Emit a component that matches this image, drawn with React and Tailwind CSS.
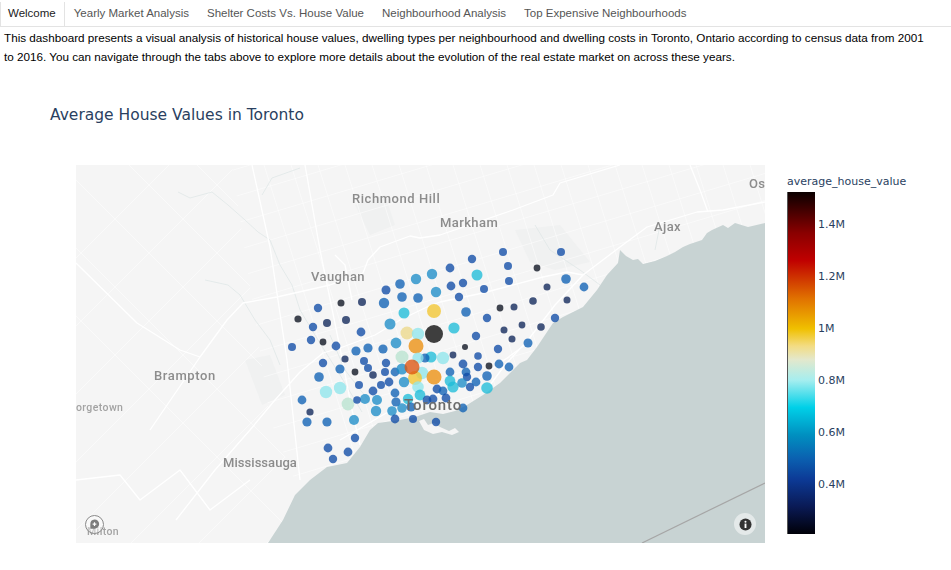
import React from 'react'

const TABS = [
  'Yearly Market Analysis',
  'Shelter Costs Vs. House Value',
  'Neighbourhood Analysis',
  'Top Expensive Neighbourhoods',
]

const TICKS = ['1.4M', '1.2M', '1M', '0.8M', '0.6M', '0.4M']

const COLORS = {
  b: '#0f4ba6',
  m: '#0f62b5',
  l: '#1d8dc8',
  c: '#1fbcd9',
  n: '#10275a',
  k: '#0c1220',
  p: '#8fe6ec',
  g: '#b9e3d0',
  y: '#f2c52f',
  w: '#ecd98a',
  o: '#ec9010',
  r: '#dd5510',
  K: '#0a0a0a',
}

// [x, y, radius, colour] in page coordinates, the svg viewBox matches them
const DOTS = [
  [386, 290, 4.5, 'b'], [400, 284, 4.8, 'm'], [416, 279, 5.2, 'l'], [318, 308, 4.2, 'b'], [341, 303, 3.5, 'k'],
  [362, 302, 4, 'n'], [384, 303, 5.2, 'm'], [402, 297, 4.8, 'm'], [418, 298, 4.8, 'm'], [404, 313, 5.5, 'c'],
  [298, 319, 3.6, 'k'], [313, 327, 4.2, 'b'], [327, 323, 4, 'n'], [346, 320, 4, 'n'], [361, 332, 4.4, 'b'],
  [390, 324, 5.5, 'l'], [407, 333, 6.5, 'w'], [418, 334, 6.2, 'p'], [416, 346, 7.5, 'o'], [311, 340, 4.2, 'b'],
  [323, 342, 3.4, 'k'], [336, 346, 4.4, 'b'], [356, 351, 4.6, 'm'], [368, 348, 4.6, 'm'], [383, 349, 4.6, 'm'],
  [396, 343, 5.4, 'l'], [292, 347, 4, 'b'], [402, 357, 6.5, 'g'],
  [503, 252, 4, 'b'], [561, 252, 4, 'b'], [472, 259, 4.2, 'b'], [450, 268, 4.4, 'b'], [432, 274, 5.2, 'l'],
  [477, 275, 5.5, 'c'], [508, 266, 4, 'b'], [537, 268, 3.4, 'k'], [463, 283, 4.2, 'b'], [451, 286, 4.4, 'b'],
  [509, 281, 4, 'b'], [484, 289, 4, 'b'], [436, 292, 5.2, 'l'], [459, 297, 4.2, 'b'], [566, 279, 4.8, 'm'],
  [584, 287, 4.4, 'm'], [547, 287, 3.5, 'n'], [567, 300, 3.5, 'n'], [533, 301, 3.8, 'n'], [514, 307, 3.5, 'n'],
  [500, 308, 3.4, 'k'], [466, 312, 4.8, 'm'], [434, 311, 7, 'y'], [487, 318, 4.2, 'b'], [522, 325, 3.4, 'n'],
  [504, 330, 3.5, 'n'], [541, 327, 3.8, 'n'], [555, 318, 4.2, 'b'], [512, 339, 3.5, 'n'], [528, 343, 4.5, 'm'],
  [476, 336, 4.2, 'b'], [454, 328, 5.6, 'c'], [434, 334, 9, 'K'], [465, 347, 3, 'k'], [498, 349, 4.2, 'b'],
  [453, 355, 3.4, 'n'], [478, 356, 3.8, 'b'], [443, 358, 6.2, 'p'], [431, 357, 5.6, 'c'], [425, 358, 4.5, 'm'],
  [418, 358, 5.6, 'p'],
  [323, 363, 4.2, 'b'], [345, 359, 3.6, 'n'], [364, 361, 4, 'b'], [386, 363, 4.2, 'b'], [319, 377, 4.8, 'm'],
  [340, 369, 4.6, 'm'], [368, 368, 4, 'b'], [355, 372, 3.4, 'k'], [373, 375, 3.8, 'n'], [385, 372, 4, 'b'],
  [395, 372, 4.4, 'm'], [359, 385, 4, 'b'], [381, 385, 4, 'b'], [389, 382, 4.4, 'b'], [373, 391, 4.4, 'b'],
  [395, 393, 4.4, 'm'], [326, 392, 6.2, 'p'], [340, 388, 6.2, 'p'], [348, 404, 6.4, 'g'], [365, 399, 5, 'l'],
  [357, 400, 3.8, 'b'], [377, 400, 5, 'l'], [302, 400, 4.4, 'm'], [396, 402, 4.6, 'm'], [310, 412, 3.6, 'n'],
  [376, 411, 5.2, 'l'], [392, 411, 4.8, 'l'], [402, 408, 4.8, 'l'], [307, 422, 4.6, 'm'], [327, 422, 4.6, 'm'],
  [354, 420, 5, 'l'], [395, 419, 4.4, 'b'], [355, 438, 4.2, 'b'], [328, 448, 4.4, 'b'], [348, 452, 4.4, 'b'],
  [333, 459, 4.2, 'b'],
  [489, 366, 3.4, 'k'], [478, 367, 4.2, 'b'], [499, 364, 4.4, 'm'], [509, 367, 4.4, 'm'], [463, 364, 4.4, 'b'],
  [402, 369, 5.5, 'l'], [422, 373, 6.2, 'p'], [415, 378, 7, 'y'], [412, 367, 7.5, 'r'], [434, 377, 7.5, 'o'],
  [450, 372, 4.4, 'm'], [466, 372, 4.4, 'm'], [467, 377, 4.2, 'b'], [487, 376, 4.8, 'm'], [450, 381, 5.4, 'c'],
  [404, 382, 5.2, 'l'], [453, 387, 5.6, 'c'], [462, 383, 4.8, 'l'], [470, 387, 4.2, 'b'], [476, 382, 4.4, 'm'],
  [487, 388, 5.8, 'c'], [418, 387, 5.8, 'p'], [437, 389, 4.4, 'b'], [443, 391, 4.4, 'm'], [420, 395, 5.4, 'c'],
  [408, 399, 5.2, 'c'], [433, 399, 4.4, 'b'], [446, 398, 4.4, 'b'], [427, 400, 4.4, 'b'], [411, 407, 4.6, 'm'],
  [463, 408, 4.4, 'm'], [413, 419, 4, 'b'], [436, 422, 4.2, 'b'],
]

const WATER =
  'M765 223 L748 227 L735 223 L728 228 L723 225 L712 230 L707 233 L702 240 L690 244 L683 247 L675 252 L667 256 L655 261 L643 264 L638 259 L633 260 L626 256 L620 250 L618 263 L607 275 L597 290 L583 307 L563 317 L553 323 L545 335 L537 347 L527 360 L520 363 L510 373 L500 383 L483 395 L467 405 L455 411 L443 414 L430 412 L415 417 L400 420 L378 423 L370 430 L360 447 L347 463 L327 467 L310 480 L295 495 L283 520 L268 543 L765 543 Z'

const ISLANDS =
  'M419 421 L424 419 L428 425 L434 423 L440 427 L449 431 L455 428 L459 432 L452 435 L442 432 L433 434 L424 430 Z'

const HIGHWAYS = [
  'M620 165 L560 183 L553 195 L513 210 L440 235 L420 238 L410 236 L380 247 L368 260 L363 273 L330 285 L277 297 L243 303 L227 320 L200 357 L176 392 L150 430',
  'M765 202 L723 210 L697 212 L647 227 L620 247 L583 275 L567 272 L543 277 L483 293 L440 302 L427 307 L400 320 L375 335 L340 348 L323 353 L300 372 L275 400 L250 430 L215 470 L176 520',
  'M583 275 L555 305 L528 340 L505 365 L490 385',
  'M76 263 L137 323 L180 350 L200 357',
  'M76 480 L120 475 L140 500 L180 470 L210 510 L250 480',
  'M305 165 L320 250 L340 348 L352 410 L360 445',
  'M252 165 L270 247 L287 360 L300 480',
  'M335 255 L345 265 L352 300',
  'M340 440 L400 405 L470 385 L525 345',
  'M690 165 L700 190 L708 212',
]

const RIVERS = [
  'M178 192 L190 198 L212 192 L228 205 L245 220 L258 232 L270 240 L280 265 L292 285 L300 310 L318 340 L340 375 L362 412',
  'M262 195 L272 178 L300 168',
  'M205 280 L228 285 L240 295 L255 320 L270 340 L280 365',
  'M535 225 L550 250 L580 270 L600 285',
  'M660 225 L655 250',
  'M330 335 L345 370 L372 405',
]

const PATCHES = [
  'M515 230 L560 225 L590 262 L555 270 L530 262 Z',
  'M245 360 L270 355 L285 395 L262 405 Z',
  'M355 205 L385 195 L395 225 L370 235 Z',
]

// thin road grids: north-west of the lake the streets run at 45deg, the Toronto part is tilted less
const DIAGONALS = Array.from({ length: 26 }, (_, i) => {
  const offset = i * 34 - 120
  return i % 2 === 0
    ? `M${offset} 120 L${offset + 480} 600`
    : `M${offset + 300} 120 L${offset - 180} 600`
})

const STREETS = Array.from({ length: 30 }, (_, i) => {
  const offset = i * 27
  return `M${250 + offset} 120 L${400 + offset} 600 M230 ${90 + offset} L800 ${-80 + offset}`
})

function Label({ x, y, size = 13, fill = '#8c8c8c', spacing = 0.4, children }) {
  return (
    <text
      x={x}
      y={y}
      fill={fill}
      fontSize={size}
      fontWeight="500"
      fontFamily="Roboto, sans-serif"
      letterSpacing={spacing}
    >
      {children}
    </text>
  )
}

function TorontoMap() {
  return (
    <svg viewBox="76 165 689 378" className="block h-full w-full blur-[0.35px]">
      <defs>
        <clipPath id="east-grid">
          <path d="M232 165 L765 165 L765 543 L320 543 L270 420 Z" />
        </clipPath>
        <clipPath id="west-grid">
          <path d="M76 165 L232 165 L270 420 L320 543 L76 543 Z" />
        </clipPath>
      </defs>
      <rect x="76" y="165" width="689" height="378" fill="#f5f5f5" />
      {PATCHES.map((d) => (
        <path key={d} d={d} fill="#f0f1f1" />
      ))}
      <g clipPath="url(#west-grid)" stroke="#ffffff" strokeWidth="0.7" strokeOpacity="0.7" fill="none">
        {DIAGONALS.map((d) => (
          <path key={d} d={d} />
        ))}
      </g>
      <g clipPath="url(#east-grid)" stroke="#ffffff" strokeWidth="0.7" strokeOpacity="0.7" fill="none">
        {STREETS.map((d) => (
          <path key={d} d={d} />
        ))}
      </g>
      <g stroke="#dde5e5" strokeWidth="0.7" fill="none">
        {RIVERS.map((d) => (
          <path key={d} d={d} />
        ))}
      </g>
      <g stroke="#ffffff" strokeWidth="1.3" fill="none" strokeLinejoin="round">
        {HIGHWAYS.map((d) => (
          <path key={d} d={d} />
        ))}
      </g>
      <path d={WATER} fill="#c8d3d3" />
      <path d={ISLANDS} fill="#f5f5f5" />
      <path d="M642 543 L765 483" stroke="#a6a6a6" strokeWidth="1.2" fill="none" />
      <Label x={352} y={203} spacing={0.55}>Richmond Hill</Label>
      <Label x={440} y={227}>Markham</Label>
      <Label x={311} y={281}>Vaughan</Label>
      <Label x={654} y={231}>Ajax</Label>
      <Label x={749} y={188}>Os</Label>
      <Label x={154} y={380} spacing={0.6}>Brampton</Label>
      <Label x={223} y={467} spacing={0.05}>Mississauga</Label>
      <Label x={76} y={411} size={10.5} fill="#a3a3a3">orgetown</Label>
      <Label x={87} y={535} size={10.5} fill="#a3a3a3">Milton</Label>
      <g>
        {DOTS.map(([x, y, r, c]) => (
          <circle key={`${x}-${y}`} cx={x} cy={y} r={r} fill={COLORS[c]} fillOpacity="0.78" />
        ))}
      </g>
      <Label x={404} y={410} size={15} spacing={0.9} fill="#6b6b6b">Toronto</Label>
    </svg>
  )
}

export default function App() {
  return (
    <div className="h-[570px] w-[951px] overflow-hidden bg-white font-['Liberation_Sans',sans-serif] text-black">
      <div className="flex h-[27px] border-b border-[#e3e3e3] pt-[2px] text-[11.5px] text-[#555555]">
        <div className="flex items-center border-x border-[#e3e3e3] pl-[7px] pr-[8px] text-[#222222]">Welcome</div>
        <div className="flex gap-[18px] pl-[9px]">
          {TABS.map((tab) => (
            <div key={tab} className="flex items-center">
              {tab}
            </div>
          ))}
        </div>
      </div>
      <p className="mt-[1px] pl-[4px] pr-[20px] text-[11.7px] leading-[19px]">
        This dashboard presents a visual analysis of historical house values, dwelling types per neighbourhood and
        dwelling costs in Toronto, Ontario according to census data from 2001 to 2016. You can navigate through the
        tabs above to explore more details about the evolution of the real estate market on across these years.
      </p>
      <h2 className="ml-[50px] mt-[39px] font-['DejaVu_Sans',sans-serif] text-[15.5px] leading-[20px] text-[#2a3f5f]">
        Average House Values in Toronto
      </h2>
      <div className="ml-[76px] mt-[40px] flex">
        <div className="relative h-[378px] w-[689px]">
          <TorontoMap />
          <div className="absolute bottom-[9px] left-[9px] flex h-[19px] w-[19px] items-center justify-center rounded-full border border-[#8a8a8a] bg-white/40">
            <svg viewBox="0 0 14 14" className="h-[13px] w-[13px]">
              <path d="M7 1.5a5 5 0 0 1 5 5 5 5 0 0 1-5 5H2.5V6.500a5 5 0 0 1 4.500-5z" fill="#7d7d7d" />
              <path d="M7 4.500v4M5 6.500h4" stroke="#ffffff" strokeWidth="1.300" />
            </svg>
          </div>
          <div className="absolute bottom-[8px] right-[9px] flex h-[22px] w-[22px] items-center justify-center rounded-full bg-white/50">
            <svg viewBox="0 0 14 14" className="h-[13px] w-[13px]">
              <circle cx="7" cy="7" r="6.500" fill="#333333" />
              <rect x="6" y="6" width="2" height="4.800" fill="#ffffff" />
              <circle cx="7" cy="4" r="1.100" fill="#ffffff" />
            </svg>
          </div>
        </div>
        <div className="ml-[22px] font-['DejaVu_Sans',sans-serif] text-[11px] text-[#2a3f5f]">
          <div className="mt-[10px] h-[14px] whitespace-nowrap leading-[14px]">average_house_value</div>
          <div className="mt-[3px] flex">
            <div className="h-[342px] w-[28px] border-l border-[#555555] bg-[linear-gradient(to_bottom,#0a0000_0%,#8a0000_12%,#c00000_20%,#e07000_31%,#f0c000_40%,#f3dc82_45%,#e3e8cc_49%,#a6eeef_55%,#00d0e8_63%,#0090c0_71%,#0b60b0_78%,#0c3a96_84%,#0a1a55_92%,#000008_100%)]" />
            <div className="ml-[3px] flex flex-col pt-[26px]">
              {TICKS.map((tick) => (
                <div key={tick} className="flex h-[52px] items-start leading-[14px]">
                  {tick}
                </div>
              ))}
            </div>
          </div>
        </div>
      </div>
    </div>
  )
}
